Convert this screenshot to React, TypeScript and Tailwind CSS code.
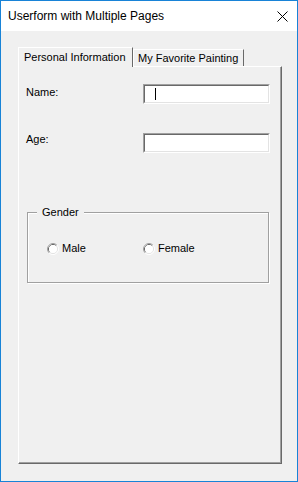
import React from "react";

function Radio() {
  return (
    <svg width="12" height="12" viewBox="0 0 12 12" className="shrink-0">
      <path d="M2.11 9.89 A5.5 5.5 0 0 1 9.89 2.11" fill="none" stroke="#a0a0a0" strokeWidth="1" />
      <path d="M9.89 2.11 A5.5 5.5 0 0 1 2.11 9.89" fill="none" stroke="#ffffff" strokeWidth="1" />
      <path d="M2.82 9.18 A4.5 4.5 0 0 1 9.18 2.82" fill="none" stroke="#696969" strokeWidth="1" />
      <path d="M9.18 2.82 A4.5 4.5 0 0 1 2.82 9.18" fill="none" stroke="#e3e3e3" strokeWidth="1" />
      <circle cx="6" cy="6" r="4" fill="#ffffff" />
    </svg>
  );
}

function TextBox({ caret }: { caret?: boolean }) {
  return (
    <div className="w-[127px] h-[20px] border-t border-l border-[#a0a0a0] border-b-white border-r-white border-b border-r shrink-0">
      <div className="w-full h-full border-t border-l border-[#696969] border-b border-r border-b-[#e3e3e3] border-r-[#e3e3e3] bg-white pl-[10px] pt-[2px]">
        {caret && <div className="w-px h-[12px] bg-black" />}
      </div>
    </div>
  );
}

export default function App() {
  return (
    <div className="w-[298px] h-[482px] border border-[#1883d7] bg-[#f0f0f0] flex flex-col font-['Liberation_Sans',Arial,sans-serif] text-black">
      <div className="h-[30px] bg-white flex items-center justify-between pl-[7px] pr-[9px] shrink-0">
        <span className="text-[12px] leading-[14px] text-[#000]">Userform with Multiple Pages</span>
        <svg width="11" height="11" viewBox="0 0 11 11">
          <path d="M0.5 0.5 L10.5 10.5 M10.5 0.5 L0.5 10.5" stroke="#000" strokeWidth="1" />
        </svg>
      </div>
      <div className="flex-1 flex flex-col pl-[17px] pr-[15px] pt-[16px] pb-[17px] text-[11px] leading-[13px]">
        <div className="flex items-end h-[19px] shrink-0 relative z-10">
          <div className="w-[115px] h-[20px] -mb-px bg-[#f0f0f0] border-t border-l border-white border-r border-r-[#696969] pl-[5px] pt-[3px] whitespace-nowrap">
            Personal Information
          </div>
          <div className="w-[111px] h-[17px] border-t border-l border-white border-r border-r-[#696969] pl-[4px] pt-[2px] whitespace-nowrap">
            My Favorite Painting
          </div>
        </div>
        <div className="flex-1 border-t border-l border-white border-r border-b border-r-[#696969] border-b-[#696969]">
          <div className="w-full h-full border-r border-b border-r-[#a0a0a0] border-b-[#a0a0a0] flex flex-col">
            <div className="flex items-start mt-[17px]">
              <div className="w-[124px] pl-[7px] pt-[2px] shrink-0">Name:</div>
              <TextBox caret />
            </div>
            <div className="flex items-start mt-[29px]">
              <div className="w-[124px] pl-[7px] pt-0 shrink-0">Age:</div>
              <TextBox />
            </div>
            <div className="relative ml-[8px] mt-[59px] w-[242px] h-[71px] border border-[#a0a0a0] shadow-[1px_1px_0_#ffffff,inset_1px_1px_0_#ffffff]">
              <div className="absolute top-[-7px] left-[9px] px-[5px] bg-[#f0f0f0]">Gender</div>
              <div className="flex items-center mt-[29px] ml-[19px]">
                <div className="flex items-center gap-[3px] w-[96px]">
                  <Radio />
                  <span>Male</span>
                </div>
                <div className="flex items-center gap-[3px]">
                  <Radio />
                  <span>Female</span>
                </div>
              </div>
            </div>
          </div>
        </div>
      </div>
    </div>
  );
}
